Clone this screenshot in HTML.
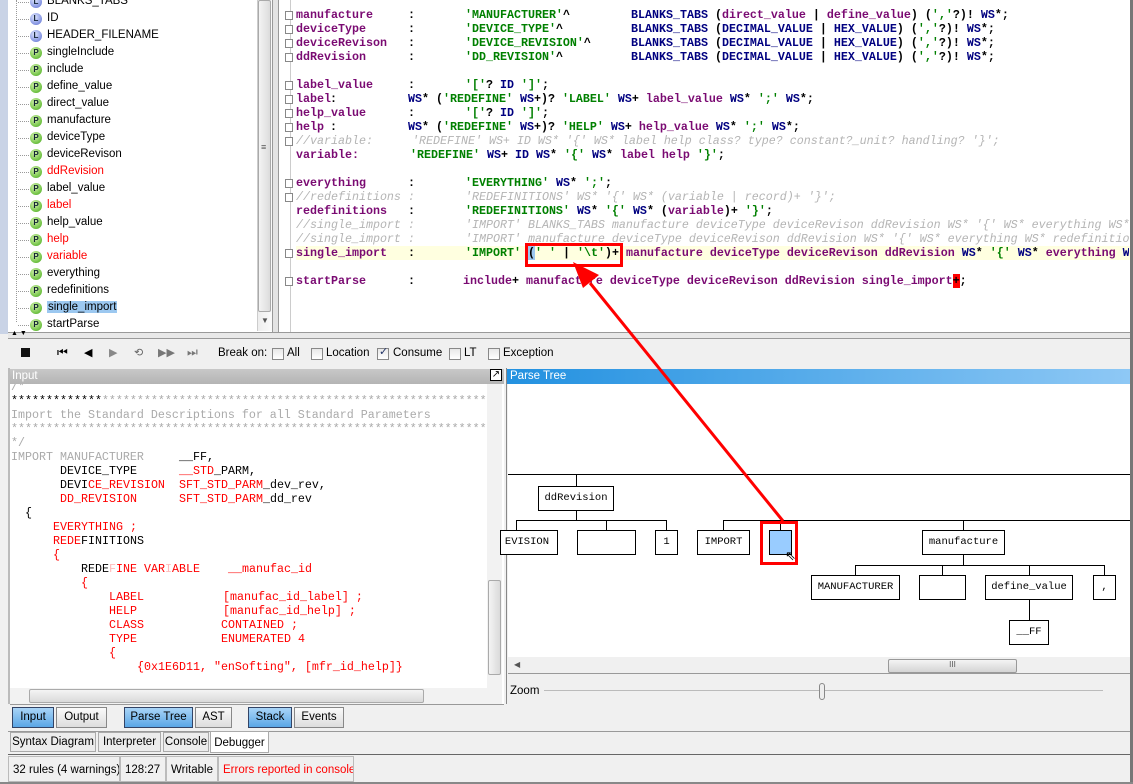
<!DOCTYPE html>
<html><head><meta charset="utf-8"><style>
*{margin:0;padding:0;box-sizing:border-box}
html,body{width:1133px;height:784px;overflow:hidden}
body{background:#f0f0f0;position:relative;font-family:"Liberation Sans",sans-serif;font-size:11.5px;color:#000}
.a{position:absolute}
.code{font-family:"Liberation Mono",monospace;font-size:11.67px;font-weight:bold;white-space:pre;line-height:14px}
.k{color:#7a0a72}.n{color:#000080}.g{color:#008000}.c{color:#b4b4b4;font-style:italic;font-weight:normal}.bk{color:#000}
.ti{position:absolute;left:47px;white-space:nowrap;font-size:11.5px}
.ic{position:absolute;left:30px;width:12px;height:12px;border-radius:50%;background:radial-gradient(circle at 40% 35%,#d8f5b0,#6cc040 70%,#3d8a20);font-size:8px;font-weight:bold;text-align:center;line-height:12px;color:#123}
.icl{background:radial-gradient(circle at 40% 35%,#e0e8ff,#8090e0 70%,#4050b0)}
.dot{position:absolute;left:18px;width:11px;border-top:1px dotted #999}
.in{font-family:"Liberation Mono",monospace;font-size:11.67px;white-space:pre;line-height:14px}
.r{color:#f00}.gr{color:#aaa}
.box{position:absolute;border:1px solid #000;background:#fff;font-family:"Liberation Mono",monospace;font-size:10.5px;text-align:center;line-height:23px}
.hl{position:absolute;height:1px;background:#000}
.vl{position:absolute;width:1px;background:#000}
.btn{position:absolute;top:707px;height:21px;border:1px solid #888;background:linear-gradient(#fafafa,#ddd);text-align:center;line-height:19px;font-size:11.5px;white-space:nowrap}
.btn.on{background:linear-gradient(#a9d4f7,#5aa6e6);border-color:#346}
.tab{position:absolute;top:732px;height:20px;border:1px solid #aaa;background:#ececec;text-align:center;line-height:18px;white-space:nowrap}
.st{position:absolute;top:756px;height:26px;border:1px solid #bbb;line-height:26px;padding-left:4px;white-space:nowrap;overflow:hidden}
.cb{position:absolute;top:348px;width:12px;height:12px;border:1px solid #888;background:linear-gradient(#e8e8e8,#fff)}
</style></head><body>

<div class="a" style="left:0;top:0;width:8px;height:334px;background:#c9d3e6"></div>
<div class="a" style="left:8px;top:0;width:265px;height:332px;background:#fff;border-right:1px solid #999"></div>
<div class="a" style="left:16px;top:0;width:1px;height:322px;border-left:1px dotted #999"></div>
<div class="a" style="left:257px;top:0;width:15px;height:331px;background:linear-gradient(90deg,#eee,#fafafa);border-left:1px solid #ccc"></div>
<div class="a" style="left:258px;top:0;width:13px;height:312px;background:linear-gradient(90deg,#f4f4f4,#dcdcdc);border:1px solid #aaa;border-radius:2px"></div>
<div class="a" style="left:261px;top:142px;font-size:9px;color:#555">≡</div>
<div class="a" style="left:261px;top:316px;font-size:8px;color:#555">▼</div>

<div id="tree"></div>

<div class="a" style="left:273px;top:0;width:5px;height:332px;background:#e4e4e4"></div>
<div class="a" style="left:278px;top:0;width:852px;height:332px;background:#fff;border-left:1px solid #999"></div>
<div class="a" style="left:290px;top:0;width:1px;height:332px;background:#ccc"></div>
<div class="a" style="left:296px;top:246px;width:834px;height:14px;background:#ffffe0"></div>
<div class="a" style="left:1130px;top:0;width:3px;height:784px;background:#777"></div>

<div class="a code" style="left:0;top:0;width:1129px;height:332px;overflow:hidden">
<div class="a" style="top:8px;left:296px"><span class="k">manufacture</span></div><div class="a" style="top:8px;left:408px">:</div><div class="a" style="top:8px;left:465px"><span class="g">'MANUFACTURER'</span>^</div><div class="a" style="top:8px;left:631px"><span class="n">BLANKS_TABS</span> (<span class="k">direct_value</span> | <span class="k">define_value</span>) (<span class="g">','</span>?)! <span class="n">WS</span>*;</div>
<div class="a" style="top:22px;left:296px"><span class="k">deviceType</span></div><div class="a" style="top:22px;left:408px">:</div><div class="a" style="top:22px;left:465px"><span class="g">'DEVICE_TYPE'</span>^</div><div class="a" style="top:22px;left:631px"><span class="n">BLANKS_TABS</span> (<span class="n">DECIMAL_VALUE</span> | <span class="n">HEX_VALUE</span>) (<span class="g">','</span>?)! <span class="n">WS</span>*;</div>
<div class="a" style="top:36px;left:296px"><span class="k">deviceRevison</span></div><div class="a" style="top:36px;left:408px">:</div><div class="a" style="top:36px;left:465px"><span class="g">'DEVICE_REVISION'</span>^</div><div class="a" style="top:36px;left:631px"><span class="n">BLANKS_TABS</span> (<span class="n">DECIMAL_VALUE</span> | <span class="n">HEX_VALUE</span>) (<span class="g">','</span>?)! <span class="n">WS</span>*;</div>
<div class="a" style="top:50px;left:296px"><span class="k">ddRevision</span></div><div class="a" style="top:50px;left:408px">:</div><div class="a" style="top:50px;left:465px"><span class="g">'DD_REVISION'</span>^</div><div class="a" style="top:50px;left:631px"><span class="n">BLANKS_TABS</span> (<span class="n">DECIMAL_VALUE</span> | <span class="n">HEX_VALUE</span>) (<span class="g">','</span>?)! <span class="n">WS</span>*;</div>

<div class="a" style="top:78px;left:296px"><span class="k">label_value</span></div><div class="a" style="top:78px;left:408px">:</div><div class="a" style="top:78px;left:465px"><span class="g">'['</span>? <span class="n">ID</span> <span class="g">']'</span>;</div>
<div class="a" style="top:92px;left:296px"><span class="k">label</span></div><div class="a" style="top:92px;left:330px">:</div><div class="a" style="top:92px;left:408px"><span class="n">WS</span>* (<span class="g">'REDEFINE'</span> <span class="n">WS</span>+)? <span class="g">'LABEL'</span> <span class="n">WS</span>+ <span class="k">label_value</span> <span class="n">WS</span>* <span class="g">';'</span> <span class="n">WS</span>*;</div>
<div class="a" style="top:106px;left:296px"><span class="k">help_value</span></div><div class="a" style="top:106px;left:408px">:</div><div class="a" style="top:106px;left:465px"><span class="g">'['</span>? <span class="n">ID</span> <span class="g">']'</span>;</div>
<div class="a" style="top:120px;left:296px"><span class="k">help</span></div><div class="a" style="top:120px;left:330px">:</div><div class="a" style="top:120px;left:408px"><span class="n">WS</span>* (<span class="g">'REDEFINE'</span> <span class="n">WS</span>+)? <span class="g">'HELP'</span> <span class="n">WS</span>+ <span class="k">help_value</span> <span class="n">WS</span>* <span class="g">';'</span> <span class="n">WS</span>*;</div>
<div class="a c" style="top:134px;left:296px">//variable:</div><div class="a c" style="top:134px;left:412px">'REDEFINE' WS+ ID WS* '{' WS* label help class? type? constant?_unit? handling? '}';</div>
<div class="a" style="top:148px;left:296px"><span class="k">variable:</span></div><div class="a" style="top:148px;left:410px"><span class="g">'REDEFINE'</span> <span class="n">WS</span>+ <span class="n">ID</span> <span class="n">WS</span>* <span class="g">'{'</span> <span class="n">WS</span>* <span class="k">label help</span> <span class="g">'}'</span>;</div>

<div class="a" style="top:176px;left:296px"><span class="k">everything</span></div><div class="a" style="top:176px;left:408px">:</div><div class="a" style="top:176px;left:465px"><span class="g">'EVERYTHING'</span> <span class="n">WS</span>* <span class="g">';'</span>;</div>
<div class="a c" style="top:190px;left:296px">//redefinitions :</div><div class="a c" style="top:190px;left:465px">'REDEFINITIONS' WS* '{' WS* (variable | record)+ '}';</div>
<div class="a" style="top:204px;left:296px"><span class="k">redefinitions</span></div><div class="a" style="top:204px;left:408px">:</div><div class="a" style="top:204px;left:465px"><span class="g">'REDEFINITIONS'</span> <span class="n">WS</span>* <span class="g">'{'</span> <span class="n">WS</span>* (<span class="k">variable</span>)+ <span class="g">'}'</span>;</div>
<div class="a c" style="top:218px;left:296px">//single_import :</div><div class="a c" style="top:218px;left:465px">'IMPORT' BLANKS_TABS manufacture deviceType deviceRevison ddRevision WS* '{' WS* everything WS*</div>
<div class="a c" style="top:232px;left:296px">//single_import :</div><div class="a c" style="top:232px;left:465px">'IMPORT' manufacture deviceType deviceRevison ddRevision WS* '{' WS* everything WS* redefinitions</div>
<div class="a" style="top:246px;left:296px"><span class="k">single_import</span></div><div class="a" style="top:246px;left:408px">:</div><div class="a" style="top:246px;left:465px"><span class="g">'IMPORT'</span> <span style="background:#9cc8f0">(</span><span class="g">' '</span> | <span class="g">'\t'</span>)+ <span class="k">manufacture deviceType deviceRevison ddRevision</span> <span class="n">WS</span>* <span class="g">'{'</span> <span class="n">WS</span>* <span class="k">everything</span> <span class="n">WS</span></div>
<div class="a" style="top:274px;left:296px"><span class="k">startParse</span></div><div class="a" style="top:274px;left:408px">:</div><div class="a" style="top:274px;left:463px"><span class="k">include</span>+ <span class="k">manufacture deviceType deviceRevison ddRevision single_import</span><span style="background:#f00">+</span>;</div>
</div>
<div id="folds"></div>

<div class="a" style="left:8px;top:332px;width:1122px;height:7px;background:#e8e8e8;border-top:1px solid #999;border-bottom:1px solid #999"></div>
<div class="a" style="left:11px;top:330px;font-size:7px">▲ ▼</div>

<div class="a" style="left:21px;top:348px;width:9px;height:9px;background:#111"></div>
<div class="a" style="left:57px;top:345px;font-size:12px">⏮</div>
<div class="a" style="left:84px;top:346px;font-size:11px">◀</div>
<div class="a" style="left:109px;top:346px;font-size:11px;color:#888">▶</div>
<div class="a" style="left:134px;top:346px;font-size:11px;color:#666">⟲</div>
<div class="a" style="left:158px;top:346px;font-size:11px;color:#777">▶▶</div>
<div class="a" style="left:187px;top:345px;font-size:12px;color:#777">⏭</div>
<div class="a" style="left:218px;top:347px">Break on:</div>
<div class="cb" style="left:272px"></div><div class="a" style="left:287px;top:347px">All</div>
<div class="cb" style="left:311px"></div><div class="a" style="left:326px;top:347px">Location</div>
<div class="cb" style="left:377px"></div><div class="a" style="left:379px;top:345px;font-size:11px;color:#236">✓</div><div class="a" style="left:393px;top:347px">Consume</div>
<div class="cb" style="left:449px"></div><div class="a" style="left:464px;top:347px">LT</div>
<div class="cb" style="left:488px"></div><div class="a" style="left:503px;top:347px">Exception</div>

<div class="a" style="left:8px;top:368px;width:2px;height:336px;background:#bbb"></div>
<div class="a" style="left:10px;top:369px;width:494px;height:15px;background:linear-gradient(#c8c8c8,#b4b4b4);color:#fff;padding-left:2px;line-height:14px">Input</div>
<div class="a" style="left:490px;top:369px;width:12px;height:12px;border:1px solid #000;background:#fff;font-size:10px;line-height:10px;text-align:center">↗</div>
<div class="a" style="left:10px;top:384px;width:494px;height:321px;background:#fff;border-bottom:1px solid #999"></div>
<div class="a in" style="left:11px;top:384px;width:475px;height:304px;overflow:hidden">
<div class="a gr" style="top:-4px;left:0">/*</div>
<div class="a" style="top:10px;left:0">*************<span class="gr">************************************************************</span></div>
<div class="a gr" style="top:24px;left:0">Import the Standard Descriptions for all Standard Parameters</div>
<div class="a gr" style="top:38px;left:0">*************************************************************************</div>
<div class="a gr" style="top:52px;left:0">*/</div>
<div class="a gr" style="top:66px;left:0">IMPORT MANUFACTURER</div><div class="a" style="top:66px;left:168px">__FF,</div>
<div class="a" style="top:80px;left:49px">DEVICE_TYPE</div><div class="a" style="top:80px;left:168px"><span class="r">__STD</span>_PARM,</div>
<div class="a" style="top:94px;left:49px">DEVI<span class="r">CE_REVISION</span></div><div class="a r" style="top:94px;left:168px">SFT_STD_PARM<span class="bk">_dev_rev,</span></div>
<div class="a r" style="top:108px;left:49px">DD_REVISION</div><div class="a r" style="top:108px;left:168px">SFT_STD_PARM<span class="bk">_dd_rev</span></div>
<div class="a" style="top:122px;left:14px">{</div>
<div class="a r" style="top:136px;left:42px">EVERYTHING ;</div>
<div class="a" style="top:150px;left:42px"><span class="r">REDE</span>FINITIONS</div>
<div class="a r" style="top:164px;left:42px">{</div>
<div class="a" style="top:178px;left:70px">REDE<span style="color:#fbb">F</span><span class="r">INE VAR</span><span style="color:#fbb">I</span><span class="r">ABLE</span></div><div class="a r" style="top:178px;left:217px">__manufac_id</div>
<div class="a r" style="top:192px;left:70px">{</div>
<div class="a r" style="top:206px;left:98px">LABEL</div><div class="a r" style="top:206px;left:212px">[manufac_id_label] ;</div>
<div class="a r" style="top:220px;left:98px">HELP</div><div class="a r" style="top:220px;left:212px">[manufac_id_help] ;</div>
<div class="a r" style="top:234px;left:98px">CLASS</div><div class="a r" style="top:234px;left:210px">CONTAINED ;</div>
<div class="a r" style="top:248px;left:98px">TYPE</div><div class="a r" style="top:248px;left:210px">ENUMERATED 4</div>
<div class="a r" style="top:262px;left:98px">{</div>
<div class="a r" style="top:276px;left:126px">{0x1E6D11, "enSofting", [mfr_id_help]}</div>
</div>
<div class="a" style="left:487px;top:384px;width:15px;height:304px;background:#f2f2f2"></div>
<div class="a" style="left:488px;top:580px;width:13px;height:95px;background:linear-gradient(90deg,#f4f4f4,#dadada);border:1px solid #aaa;border-radius:2px"></div>
<div class="a" style="left:10px;top:688px;width:492px;height:16px;background:#f2f2f2"></div>
<div class="a" style="left:29px;top:689px;width:395px;height:14px;background:linear-gradient(#f4f4f4,#dadada);border:1px solid #aaa;border-radius:2px"></div>

<div class="a" style="left:506px;top:368px;width:1px;height:336px;background:#888"></div>
<div class="a" style="left:507px;top:369px;width:623px;height:15px;background:linear-gradient(90deg,#2391e0,#8ec8f5);color:#fff;padding-left:3px;line-height:14px">Parse Tree</div>
<div class="a" style="left:508px;top:384px;width:622px;height:273px;background:#fff"></div>
<div class="a" style="left:508px;top:657px;width:622px;height:17px;background:#f0f0f0;border-bottom:1px solid #999"></div>
<div class="a" style="left:888px;top:659px;width:129px;height:14px;background:linear-gradient(#f4f4f4,#d4d4d4);border:1px solid #999;border-radius:2px;font-size:8px;text-align:center;color:#555">III</div>
<div class="a" style="left:514px;top:660px;font-size:8px;color:#555">◀</div>
<div class="a" style="left:510px;top:685px">Zoom</div>
<div class="a" style="left:544px;top:690px;width:559px;height:1px;background:#bbb"></div>
<div class="a" style="left:819px;top:683px;width:6px;height:17px;border:1px solid #888;border-radius:3px;background:#eee"></div>

<div class="hl" style="left:508px;top:474px;width:622px"></div>
<div class="vl" style="left:576px;top:475px;height:11px"></div>
<div class="box" style="left:538px;top:486px;width:76px;height:25px">ddRevision</div>
<div class="vl" style="left:576px;top:511px;height:9px"></div>
<div class="hl" style="left:516px;top:520px;width:151px"></div>
<div class="vl" style="left:516px;top:520px;height:10px"></div><div class="vl" style="left:606px;top:520px;height:10px"></div><div class="vl" style="left:666px;top:520px;height:10px"></div>
<div class="hl" style="left:723px;top:520px;width:407px"></div>
<div class="vl" style="left:723px;top:520px;height:10px"></div><div class="vl" style="left:780px;top:520px;height:10px"></div><div class="vl" style="left:963px;top:520px;height:10px"></div>
<div class="box" style="left:500px;top:530px;width:58px;height:25px;text-align:right;padding-right:8px">EVISION</div>
<div class="box" style="left:577px;top:530px;width:59px;height:25px"></div>
<div class="box" style="left:655px;top:530px;width:23px;height:25px">1</div>
<div class="box" style="left:697px;top:530px;width:53px;height:25px">IMPORT</div>
<div class="box" style="left:769px;top:530px;width:23px;height:25px;background:#99ccff"></div>
<div class="box" style="left:922px;top:530px;width:83px;height:25px">manufacture</div>
<div class="vl" style="left:963px;top:555px;height:10px"></div>
<div class="hl" style="left:855px;top:565px;width:249px"></div>
<div class="vl" style="left:855px;top:565px;height:10px"></div><div class="vl" style="left:942px;top:565px;height:10px"></div><div class="vl" style="left:1029px;top:565px;height:10px"></div><div class="vl" style="left:1104px;top:565px;height:10px"></div>
<div class="box" style="left:811px;top:575px;width:89px;height:25px">MANUFACTURER</div>
<div class="box" style="left:919px;top:575px;width:47px;height:25px"></div>
<div class="box" style="left:985px;top:575px;width:88px;height:25px">define_value</div>
<div class="box" style="left:1093px;top:575px;width:23px;height:25px">,</div>
<div class="vl" style="left:1029px;top:600px;height:20px"></div>
<div class="box" style="left:1009px;top:620px;width:40px;height:25px">__FF</div>
<div class="a" style="left:760px;top:521px;width:38px;height:44px;border:3px solid #f00"></div>
<div class="a" style="left:785px;top:548px;font-size:13px">⇖</div>

<div class="a" style="left:525px;top:243px;width:98px;height:24px;border:3px solid #f00"></div>
<svg class="a" style="left:0;top:0" width="1133" height="784"><line x1="783" y1="521" x2="590" y2="283" stroke="#f00" stroke-width="3"/><polygon points="573,262 599,275 583,288" fill="#f00"/></svg>

<div class="btn on" style="left:12px;width:42px">Input</div>
<div class="btn" style="left:56px;width:51px">Output</div>
<div class="btn on" style="left:124px;width:69px">Parse Tree</div>
<div class="btn" style="left:195px;width:37px">AST</div>
<div class="btn on" style="left:248px;width:44px">Stack</div>
<div class="btn" style="left:294px;width:50px">Events</div>
<div class="a" style="left:8px;top:731px;width:1122px;height:1px;background:#999"></div>
<div class="tab" style="left:10px;width:86px">Syntax Diagram</div>
<div class="tab" style="left:98px;width:63px">Interpreter</div>
<div class="tab" style="left:163px;width:46px">Console</div>
<div class="tab" style="left:210px;width:59px;background:#fff;height:22px;top:731px;line-height:22px">Debugger</div>
<div class="a" style="left:8px;top:754px;width:1122px;height:1px;background:#666"></div>
<div class="st" style="left:8px;width:112px">32 rules (4 warnings)</div>
<div class="st" style="left:120px;width:46px">128:27</div>
<div class="st" style="left:166px;width:52px">Writable</div>
<div class="st" style="left:218px;width:136px;color:#f00">Errors reported in console</div>
<div class="a" style="left:0;top:782px;width:1133px;height:2px;background:#888"></div>

<script>
var items=[["BLANKS_TABS",1,0],["ID",1,0],["HEADER_FILENAME",1,0],["singleInclude",0,0],["include",0,0],["define_value",0,0],["direct_value",0,0],["manufacture",0,0],["deviceType",0,0],["deviceRevison",0,0],["ddRevision",0,1],["label_value",0,0],["label",0,1],["help_value",0,0],["help",0,1],["variable",0,1],["everything",0,0],["redefinitions",0,0],["single_import",0,0],["startParse",0,0]];
var h="";
items.forEach(function(it,i){var y=-5+i*17;
h+='<div class="dot" style="top:'+(y+7)+'px"></div>';
h+='<div class="ic'+(it[1]?' icl':'')+'" style="top:'+(y+1)+'px">'+(it[1]?'L':'P')+'</div>';
var st=it[2]?'color:#f00;':'';
if(it[0]=="single_import")st+='background:#9cc8f0;padding:0 1px;';
h+='<div class="ti" style="top:'+y+'px;'+st+'">'+it[0]+'</div>';});
document.getElementById("tree").innerHTML=h;
var f="";[8,22,36,50,78,92,106,120,134,176,190,246,274].forEach(function(y){f+='<div class="a" style="left:285px;top:'+(y+3)+'px;width:8px;height:9px;border:1px solid #888;background:#fff"></div>';});
document.getElementById("folds").innerHTML=f;
</script>
</body></html>
